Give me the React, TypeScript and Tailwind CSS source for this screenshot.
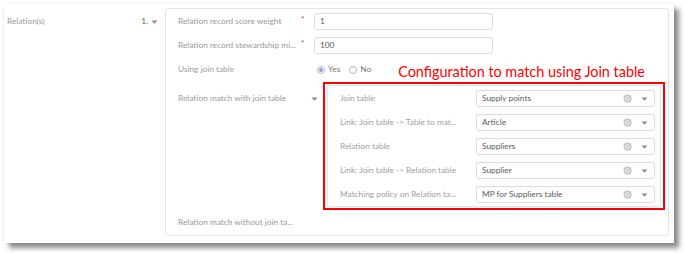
import React from 'react';

const font = { fontFamily: 'Lato, "Open Sans", sans-serif' };

function Caret() {
  return (
    <svg width="7" height="4" viewBox="0 0 7 4" className="shrink-0">
      <path d="M0.5 0.5h6L3.5 3.8z" fill="#8a8a8a" />
    </svg>
  );
}

function ClearIcon() {
  return (
    <svg width="9" height="9" viewBox="0 0 9 9" className="shrink-0">
      <circle cx="4.5" cy="4.5" r="4" fill="#c4c4c4" />
      <circle cx="4.5" cy="4.5" r="2.6" fill="#e6e6e6" />
      <path d="M3.4 3.4l2.2 2.2M5.6 3.4L3.4 5.6" stroke="#b0b0b0" strokeWidth="0.9" />
    </svg>
  );
}

function Radio({ checked }: { checked?: boolean }) {
  return (
    <span className="w-[8px] h-[8px] rounded-full border border-[#b5b5b5] bg-white flex items-center justify-center">
      {checked && <span className="w-[4px] h-[4px] rounded-full bg-[#7aa6de]" />}
    </span>
  );
}

const selects = [
  ['Join table', 'Supply points'],
  ['Link: Join table -> Table to mat...', 'Article'],
  ['Relation table', 'Suppliers'],
  ['Link: Join table -> Relation table', 'Supplier'],
  ['Matching policy on Relation ta...', 'MP for Suppliers table'],
];

export default function App() {
  return (
    <div className="w-[685px] h-[253px] bg-white pt-[4px] pl-[4px] text-[8.3px] whitespace-nowrap" style={font}>
      <div className="w-[670px] h-[239px] bg-white flex shadow-[0_0_3px_rgba(0,0,0,0.12),5px_5px_5px_rgba(0,0,0,0.45)]">
        <div className="w-[161px] shrink-0 pl-[3px] pr-[7px] pt-[9px] flex justify-between items-start">
          <span className="h-[17px] flex items-center text-[#9a9a9a]">Relation(s)</span>
          <span className="h-[17px] flex items-center gap-[3px] text-[#666]">
            1.
            <Caret />
          </span>
        </div>

        <div className="mt-[4px] w-[504px] shrink-0 h-[228px] border border-[#e4e4e4] rounded-[3px] px-[12px] pt-[4px]">
          <div className="h-[17px] mb-[7px] flex items-center">
            <span className="w-[123px] shrink-0 text-[#9a9a9a]">Relation record score weight</span>
            <span className="w-[13px] shrink-0 text-[#e03a3a] self-start leading-[12px]">*</span>
            <div className="w-[179px] shrink-0 h-[17px] border border-[#dcdcdc] rounded-[3px] px-[5px] flex items-center text-[#5a5a5a]">1</div>
          </div>
          <div className="h-[17px] mb-[7px] flex items-center">
            <span className="w-[123px] shrink-0 text-[#9a9a9a]">Relation record stewardship mi...</span>
            <span className="w-[13px] shrink-0 text-[#e03a3a] self-start leading-[12px]">*</span>
            <div className="w-[179px] shrink-0 h-[17px] border border-[#dcdcdc] rounded-[3px] px-[5px] flex items-center text-[#5a5a5a]">100</div>
          </div>
          <div className="h-[17px] mb-[4px] flex items-center">
            <span className="w-[136px] shrink-0 text-[#9a9a9a]">Using join table</span>
            <span className="ml-[3px] flex items-center gap-[3px] text-[#777]">
              <Radio checked />
              Yes
            </span>
            <span className="ml-[9px] flex items-center gap-[3px] text-[#777]">
              <Radio />
              No
            </span>
            <span
              className="ml-[27px] text-[14.4px] text-[#f00] translate-y-[2px]"
              style={{ fontFamily: 'Lato, sans-serif' }}
            >
              Configuration to match using Join table
            </span>
          </div>

          <div className="flex">
            <div className="w-[145px] shrink-0 pt-[8px]">
              <div className="h-[17px] flex items-center justify-between pr-[5px]">
                <span className="text-[#9a9a9a]">Relation match with join table</span>
                <Caret />
              </div>
            </div>
            <div className="w-[342px] shrink-0 border-2 border-[#f00] px-[2px] pt-[1px] pb-[1px]">
              <div className="border border-[#e4e4e4] rounded-[2px] pl-[12px] pr-[5px] pt-[4px] pb-[3px] flex flex-col gap-[7px]">
                {selects.map(([label, value]) => (
                  <div key={label} className="h-[17px] flex items-center">
                    <span className="w-[136px] shrink-0 text-[#a0a0a0]">{label}</span>
                    <div className="w-[179px] shrink-0 h-[17px] border border-[#dcdcdc] rounded-[3px] pl-[5px] pr-[6px] flex items-center text-[#5a5a5a]">
                      <span className="flex-1">{value}</span>
                      <ClearIcon />
                      <span className="ml-[9px]">
                        <Caret />
                      </span>
                    </div>
                  </div>
                ))}
              </div>
            </div>
          </div>

          <div className="mt-[4px] h-[17px] flex items-center text-[#9a9a9a]">Relation match without join ta...</div>
        </div>
      </div>
    </div>
  );
}
